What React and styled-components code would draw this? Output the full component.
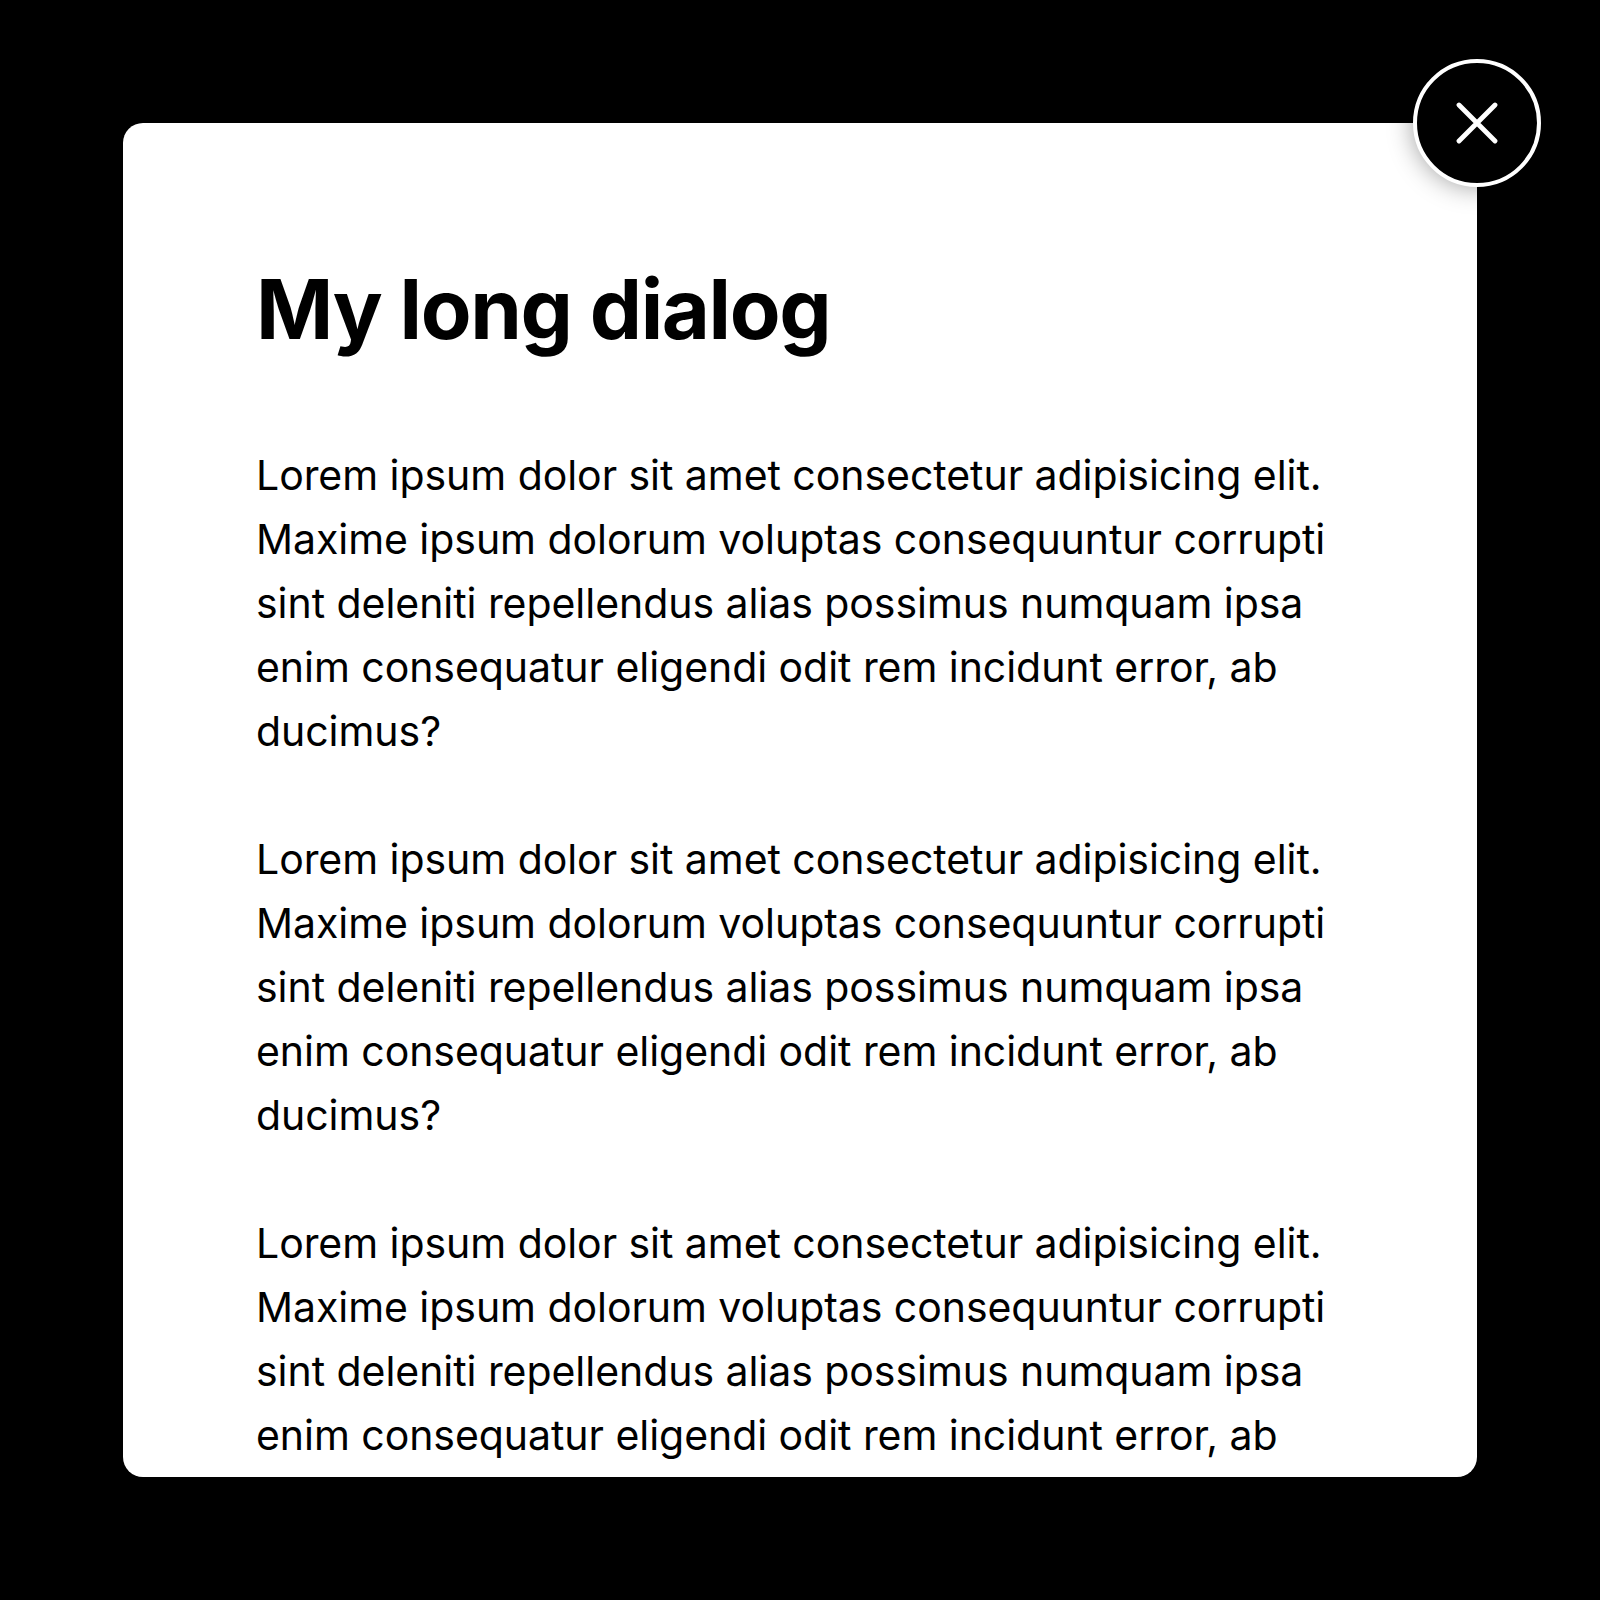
import React from "react";
import styled, { createGlobalStyle } from "styled-components";

const GlobalStyle = createGlobalStyle`
  html, body {
    margin: 0;
    padding: 0;
    background: #000;
  }
  body {
    font-family: Inter, "Noto Sans", "Liberation Sans", sans-serif;
    color: #000;
  }
`;

const Backdrop = styled.div`
  width: 1600px;
  height: 1600px;
  background: #000;
  display: flex;
  align-items: center;
  justify-content: center;
`;

const Frame = styled.div`
  position: relative;
  width: 1354px;
  height: 1354px;
`;

const Dialog = styled.div`
  box-sizing: border-box;
  width: 100%;
  height: 100%;
  background: #fff;
  border-radius: 20px;
  overflow: hidden;
  padding: 137px 133px;
`;

const Title = styled.h1`
  margin: 0 0 83.5px;
  font-size: 83px;
  line-height: 1.2;
  font-weight: 700;
  letter-spacing: -1.4px;
`;

const Paragraph = styled.p`
  margin: 0 0 64px;
  font-size: 41px;
  line-height: 64px;
  font-weight: 400;
  letter-spacing: -0.05px;
`;

const CloseButton = styled.button`
  position: absolute;
  top: 0;
  right: 0;
  transform: translate(50%, -50%);
  box-sizing: border-box;
  width: 128px;
  height: 128px;
  border-radius: 50%;
  background: #000;
  border: 4px solid #fff;
  box-shadow: 0 0 26px rgba(0, 0, 0, 0.38);
  display: flex;
  align-items: center;
  justify-content: center;
  padding: 0;
  cursor: pointer;
`;

const CloseIcon = () => (
  <svg width="42" height="42" viewBox="0 0 42 42" fill="none">
    <path
      d="M3 3L39 39M39 3L3 39"
      stroke="#fff"
      strokeWidth="4.8"
      strokeLinecap="round"
    />
  </svg>
);

const text =
  "Lorem ipsum dolor sit amet consectetur adipisicing elit. Maxime ipsum dolorum voluptas consequuntur corrupti sint deleniti repellendus alias possimus numquam ipsa enim consequatur eligendi odit rem incidunt error, ab ducimus?";

export default function App() {
  return (
    <>
      <GlobalStyle />
      <Backdrop>
        <Frame>
          <Dialog>
            <Title>My long dialog</Title>
            <Paragraph>{text}</Paragraph>
            <Paragraph>{text}</Paragraph>
            <Paragraph>{text}</Paragraph>
          </Dialog>
          <CloseButton aria-label="Close">
            <CloseIcon />
          </CloseButton>
        </Frame>
      </Backdrop>
    </>
  );
}
